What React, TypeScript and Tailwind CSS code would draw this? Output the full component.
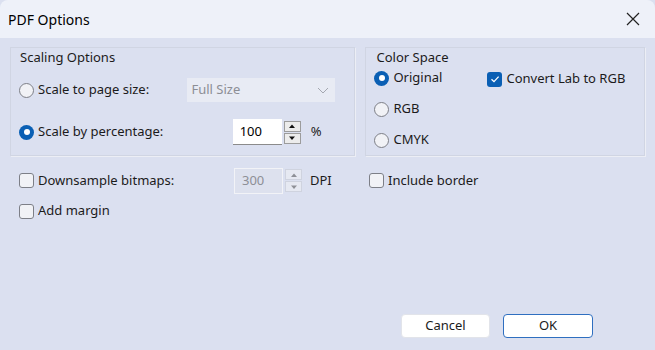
import type { ReactNode } from "react";

const Radio = ({ checked }: { checked?: boolean }) =>
  checked ? (
    <span className="w-[15px] h-[15px] rounded-full bg-[#0a5fb4] flex items-center justify-center shrink-0">
      <span className="w-[6px] h-[6px] rounded-full bg-white" />
    </span>
  ) : (
    <span className="w-[15px] h-[15px] rounded-full border border-[#7d7f87] bg-[#f1f2f6] shrink-0" />
  );

const Check = ({ checked }: { checked?: boolean }) =>
  checked ? (
    <span className="w-[15px] h-[15px] rounded-[3px] bg-[#0a5fb4] flex items-center justify-center shrink-0">
      <svg width="10" height="10" viewBox="0 0 10 10">
        <path d="M1.5 5.2 L4 7.6 L8.6 2.6" fill="none" stroke="white" strokeWidth="1.3" />
      </svg>
    </span>
  ) : (
    <span className="w-[15px] h-[15px] rounded-[3px] border border-[#7d7f87] bg-[#f1f2f6] shrink-0" />
  );

const Option = ({ control, children }: { control: ReactNode; children: ReactNode }) => (
  <div className="flex items-center gap-[4px] h-4">
    {control}
    <span>{children}</span>
  </div>
);

const Spinner = ({ value, disabled }: { value: string; disabled?: boolean }) => (
  <div className="flex h-[26px]">
    <div
      className={`w-[49px] h-full flex items-center pl-[7px] border-b ${
        disabled
          ? "bg-[#dde1ee] text-[#8d8f96] border border-[#f2f3f7]"
          : "bg-white text-black border-[#8b8b8b]"
      }`}
    >
      {value}
    </div>
    <div className="w-[21px] h-full flex flex-col justify-center gap-[1px] px-[2px]">
      {["M1 5 L4 1.5 L7 5 Z", "M1 1.5 L4 5 L7 1.5 Z"].map((d) => (
        <div
          key={d}
          className={`h-[11px] flex items-center justify-center border ${
            disabled ? "border-[#cfd3df] bg-[#e6e9f2]" : "border-[#9c9c9c] bg-[#ececec]"
          }`}
        >
          <svg width="8" height="6" viewBox="0 0 8 6">
            <path d={d} fill={disabled ? "#8e9097" : "#111"} />
          </svg>
        </div>
      ))}
    </div>
  </div>
);

export default function App() {
  return (
    <div
      className="w-[655px] h-[350px] flex flex-col bg-[#dbe0f0] text-[13px] text-[#1b1b1b] overflow-hidden"
      style={{ fontFamily: '"Noto Sans", "Liberation Sans", sans-serif' }}
    >
      <div className="h-[38px] shrink-0 flex items-center justify-between pl-[8px] pr-[15px] bg-[#eef1f9] rounded-t-[8px]">
        <span className="text-[14px] text-black">PDF Options</span>
        <svg width="14" height="14" viewBox="0 0 14 14">
          <path d="M1 1 L13 13 M13 1 L1 13" stroke="#222" strokeWidth="1.2" />
        </svg>
      </div>

      <div className="flex-1 flex flex-col px-[10px] pt-[9px]">
        <div className="flex gap-[10px]">
          <div className="w-[346px] h-[109px] border border-[#d0d5e3] shadow-[1px_1px_0_#eceef5] pl-[8px] pr-[19px]">
            <div className="pl-[1px] leading-4 mt-[1px]">Scaling Options</div>
            <div className="flex items-center justify-between mt-[13px] h-[24px]">
              <Option control={<Radio />}>Scale to page size:</Option>
              <div className="w-[148px] h-[24px] bg-[#e8ebf4] text-[#8c8e95] flex items-center justify-between pl-[4px] pr-[6px]">
                <span>Full Size</span>
                <svg width="12" height="7" viewBox="0 0 12 7">
                  <path d="M1 1 L6 6 L11 1" fill="none" stroke="#a4a7b0" strokeWidth="1" />
                </svg>
              </div>
            </div>
            <div className="flex items-center mt-[17px] h-[26px]">
              <Option control={<Radio checked />}>Scale by percentage:</Option>
              <div className="ml-auto flex items-center gap-[8px] mr-[14px]">
                <Spinner value="100" />
                <span>%</span>
              </div>
            </div>
          </div>

          <div className="w-[280px] h-[109px] border border-[#d0d5e3] shadow-[1px_1px_0_#eceef5] pl-[8px]">
            <div className="pl-[2px] leading-4 mt-[1px]">Color Space</div>
            <div className="flex mt-[5px]">
              <div className="flex flex-col gap-[15px] w-[113px]">
                <Option control={<Radio checked />}>Original</Option>
                <Option control={<Radio />}>RGB</Option>
                <Option control={<Radio />}>CMYK</Option>
              </div>
              <div className="mt-[1px]">
                <Option control={<Check checked />}>Convert Lab to RGB</Option>
              </div>
            </div>
          </div>
        </div>

        <div className="flex items-center mt-[11px] h-[27px] pl-[9px]">
          <div className="w-[215px]">
            <Option control={<Check />}>Downsample bitmaps:</Option>
          </div>
          <Spinner value="300" disabled />
          <span className="ml-[6px] w-[59px]">DPI</span>
          <Option control={<Check />}>Include border</Option>
        </div>
        <div className="flex items-center mt-[9px] pl-[9px]">
          <Option control={<Check />}>Add margin</Option>
        </div>

        <div className="mt-auto mb-[12px] mr-[52px] flex justify-end gap-[13px]">
          <button className="w-[89px] h-[24px] bg-white rounded-[4px] border border-[#e2e4ea] text-[#1b1b1b]">
            Cancel
          </button>
          <button className="w-[90px] h-[24px] bg-white rounded-[4px] border border-[#2f6fc0] text-[#1b1b1b]">
            OK
          </button>
        </div>
      </div>
    </div>
  );
}
